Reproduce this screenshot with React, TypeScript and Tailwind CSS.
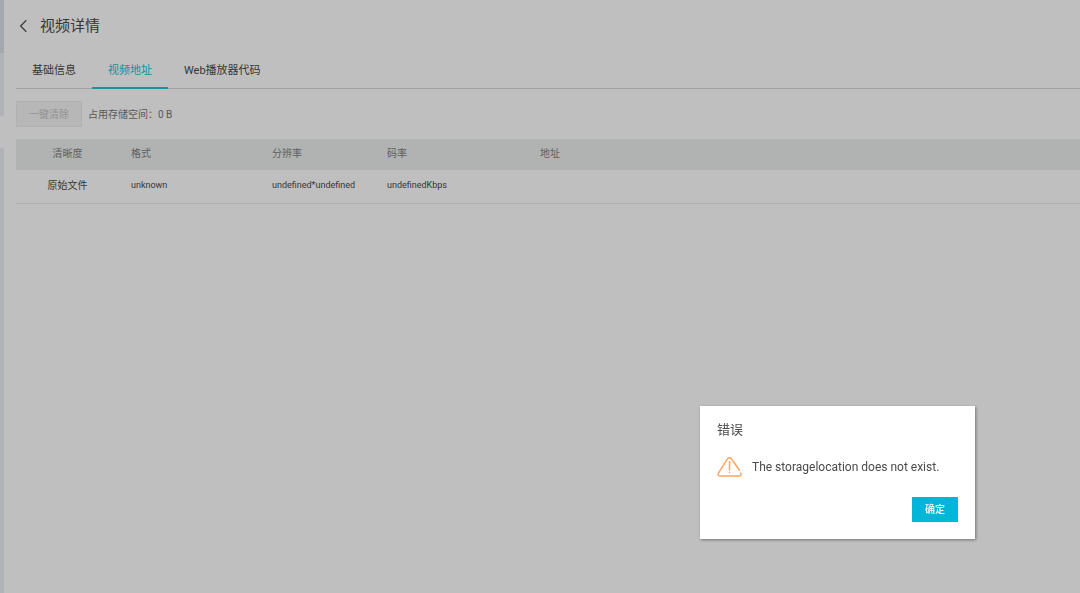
import React, { useState } from "react";

const tabs = ["基础信息", "视频地址", "Web播放器代码"];

const columns = [
  { title: "清晰度", style: "w-[103px] text-center text-[10px]" },
  { title: "格式", style: "w-[141px] px-3 text-left" },
  { title: "分辨率", style: "w-[115px] px-3 text-left" },
  { title: "码率", style: "w-[153px] px-3 text-left" },
  { title: "地址", style: "px-3 text-left" },
];

const files = [
  ["原始文件", "unknown", "undefined*undefined", "undefinedKbps", ""],
];

const SideRail = () => (
  <div className="flex w-1 shrink-0 flex-col">
    <div className="h-[53px] bg-[#dce0e7]" />
    <div className="h-[63px] bg-[#edeef3]" />
    <div className="h-8" />
    <div className="grow bg-[#edeef3]" />
  </div>
);

const WarningIcon = () => (
  <svg
    width="26"
    height="22"
    viewBox="0 0 26 22"
    fill="none"
    stroke="#ffa662"
    strokeWidth="1.5"
    strokeLinecap="round"
    strokeLinejoin="round"
    aria-hidden="true"
  >
    <path d="M20.4 11.2 14.6 2.9Q12.5 0.5 10.4 2.9L1.3 17.4Q0.4 19.8 2.8 20H22.3Q24.6 19.8 24 17.7L23.7 17" />
    <path d="M20.4 11.2 22.4 14.4" />
    <path d="M12.5 5.5V14M12.5 16.2V16.6" />
  </svg>
);

const ErrorDialog = ({ message, onClose }: { message: string; onClose: () => void }) => (
  <div className="fixed inset-0 flex items-end justify-end bg-black/25 pr-[105px] pb-[54px]">
    <div
      role="alertdialog"
      aria-labelledby="error-title"
      className="w-[275px] bg-white px-[17px] pt-4 pb-[17px] shadow-[1px_1px_3px_rgba(0,0,0,0.4)]"
    >
      <h2 id="error-title" className="text-[13px] leading-4">
        错误
      </h2>
      <div className="mt-4 flex h-[26px] items-center gap-[9px]">
        <WarningIcon />
        <p className="text-xs whitespace-nowrap">{message}</p>
      </div>
      <div className="mt-[17px] flex justify-end">
        <button
          onClick={onClose}
          className="h-[25px] bg-[#00b7d7] px-[13px] text-[10px] font-medium text-white"
        >
          确定
        </button>
      </div>
    </div>
  </div>
);

const App = () => {
  const [active, setActive] = useState(1);
  const [open, setOpen] = useState(true);

  return (
    <div className="flex min-h-screen bg-white font-[Roboto,'Noto_Sans_CJK_SC',sans-serif] text-[#4a4a4a]">
      <SideRail />
      <main className="min-w-0 grow pl-3">
        <header className="flex h-[52px] items-center gap-3">
          <button aria-label="返回" className="pl-[3px]">
            <svg width="9" height="14" viewBox="0 0 9 14" fill="none" stroke="#555" strokeWidth="1.3">
              <path d="M7.3 1.2 1.6 7l5.7 5.8" />
            </svg>
          </button>
          <h1 className="text-[15px] leading-5">视频详情</h1>
        </header>

        <nav className="flex h-[37px] border-b border-[#d8d8d8] text-[11px]">
          {tabs.map((tab, i) => (
            <button
              key={tab}
              onClick={() => setActive(i)}
              className={
                i === active
                  ? "-mb-px border-b-2 border-[#20c2d8] px-4 pt-1 text-[#20c2d8]"
                  : "-mb-px border-b-2 border-transparent px-4 pt-1"
              }
            >
              {tab}
            </button>
          ))}
        </nav>

        <div className="flex items-center gap-[6px] py-3 text-[10px]">
          <button
            disabled
            className="h-[26px] w-[66px] border border-[#ececec] bg-[#f5f5f5] text-[#c4c4c4]"
          >
            一键清除
          </button>
          <span className="text-[#777]">占用存储空间：0 B</span>
        </div>

        <table className="w-full table-fixed text-[9px]">
          <thead>
            <tr className="h-[31px] bg-[#ebefee] text-[10px] text-[#808080]">
              {columns.map((col) => (
                <th key={col.title} className={`${col.style} pb-[3px] font-normal`}>
                  {col.title}
                </th>
              ))}
            </tr>
          </thead>
          <tbody>
            {files.map((row) => (
              <tr key={row[0]} className="h-[33px] border-b border-[#ebebeb]">
                {row.map((cell, i) => (
                  <td key={columns[i].title} className={`${columns[i].style} pb-[2px]`}>
                    {cell}
                  </td>
                ))}
              </tr>
            ))}
          </tbody>
        </table>
      </main>
      {open && (
        <ErrorDialog message="The storagelocation does not exist." onClose={() => setOpen(false)} />
      )}
    </div>
  );
};

export default App;
